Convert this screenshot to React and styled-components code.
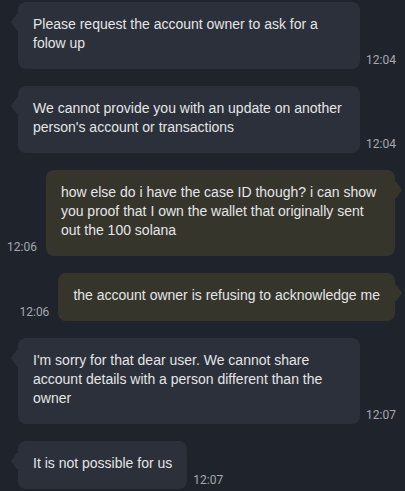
import styled, { createGlobalStyle, css } from 'styled-components';

const GlobalStyle = createGlobalStyle`
  html, body {
    margin: 0;
    padding: 0;
    background: #1f232b;
  }
  * {
    box-sizing: border-box;
  }
`;

const messages = [
  { id: 1, side: 'in', time: '12:04', text: 'Please request the account owner to ask for a folow up' },
  { id: 2, side: 'in', time: '12:04', text: "We cannot provide you with an update on another person's account or transactions" },
  {
    id: 3,
    side: 'out',
    time: '12:06',
    text: 'how else do i have the case ID though? i can show you proof that I own the wallet that originally sent out the 100 solana',
  },
  { id: 4, side: 'out', time: '12:06', text: 'the account owner is refusing to acknowledge me' },
  {
    id: 5,
    side: 'in',
    time: '12:07',
    text: "I'm sorry for that dear user. We cannot share account details with a person different than the owner",
  },
  { id: 6, side: 'in', time: '12:07', text: 'It is not possible for us' },
];

const Chat = styled.div`
  width: 405px;
  height: 491px;
  overflow: hidden;
  background: #1f232b;
  padding-top: 2px;
  display: flex;
  flex-direction: column;
  gap: 17px;
  font-family: 'Liberation Sans', Arial, sans-serif;
`;

const Row = styled.div`
  display: flex;
  align-items: flex-end;
  ${(p) =>
    p.$out
      ? css`
          flex-direction: row-reverse;
          padding: 0 10px 0 7px;
          gap: 9px;
        `
      : css`
          padding: 0 9px 0 18px;
          gap: 6px;
        `}
`;

const Bubble = styled.div`
  position: relative;
  flex: 0 1 auto;
  padding: 13px 15px 16px;
  border-radius: 8px;
  background: ${(p) => (p.$out ? '#36352c' : '#2b303a')};
  color: #e4e5e7;
  font-size: 14px;
  line-height: 19px;

  &::before {
    content: '';
    position: absolute;
    top: 12px;
    width: 8px;
    height: 16px;
    background: inherit;
    ${(p) =>
      p.$out
        ? css`
            right: -7px;
            clip-path: polygon(0 0, 30% 0, 100% 50%, 30% 100%, 0 100%);
          `
        : css`
            left: -7px;
            clip-path: polygon(100% 0, 70% 0, 0 50%, 70% 100%, 100% 100%);
          `}
  }
`;

const Time = styled.span`
  flex: none;
  font-family: Roboto, 'Liberation Sans', sans-serif;
  font-size: 12px;
  line-height: 14px;
  color: #a4a9b2;
  padding-bottom: 2px;
`;

export default function App() {
  return (
    <>
      <GlobalStyle />
      <Chat>
        {messages.map((m) => (
          <Row key={m.id} $out={m.side === 'out'}>
            <Bubble $out={m.side === 'out'}>{m.text}</Bubble>
            <Time>{m.time}</Time>
          </Row>
        ))}
      </Chat>
    </>
  );
}
